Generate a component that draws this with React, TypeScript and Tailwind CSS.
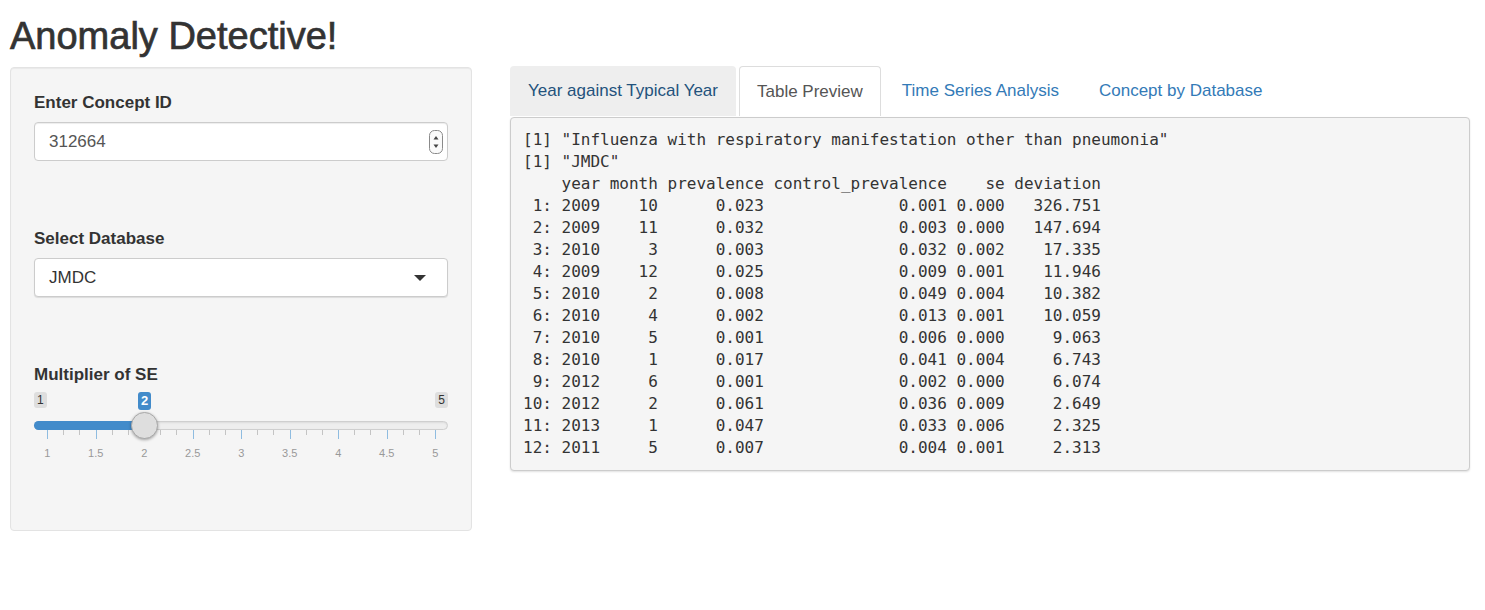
import React from "react";

const sans = { fontFamily: '"Liberation Sans", Arial, Helvetica, sans-serif' };

const preLines = [
  '[1] "Influenza with respiratory manifestation other than pneumonia"',
  '[1] "JMDC"',
  "    year month prevalence control_prevalence    se deviation",
  " 1: 2009    10      0.023              0.001 0.000   326.751",
  " 2: 2009    11      0.032              0.003 0.000   147.694",
  " 3: 2010     3      0.003              0.032 0.002    17.335",
  " 4: 2009    12      0.025              0.009 0.001    11.946",
  " 5: 2010     2      0.008              0.049 0.004    10.382",
  " 6: 2010     4      0.002              0.013 0.001    10.059",
  " 7: 2010     5      0.001              0.006 0.000     9.063",
  " 8: 2010     1      0.017              0.041 0.004     6.743",
  " 9: 2012     6      0.001              0.002 0.000     6.074",
  "10: 2012     2      0.061              0.036 0.009     2.649",
  "11: 2013     1      0.047              0.033 0.006     2.325",
  "12: 2011     5      0.007              0.004 0.001     2.313",
];

const tickLabels = ["1", "1.5", "2", "2.5", "3", "3.5", "4", "4.5", "5"];

// ion.rangeSlider look-alike: min/max/value badges, track, handle, grid
const Slider = () => (
  <div className="w-full pt-[2px]">
    <div className="relative flex h-[18px] items-start justify-between">
      <span className="h-[16px] rounded-[3px] bg-[#dedede] px-[3px] text-[12px] leading-[16px] text-[#333]">1</span>
      <span className="absolute left-[104px] top-0 h-[18px] rounded-[3px] bg-[#428bca] px-[3px] text-[13px] font-bold leading-[18px] text-white">2</span>
      <span className="h-[16px] rounded-[3px] bg-[#dedede] px-[3px] text-[12px] leading-[16px] text-[#333]">5</span>
    </div>
    <div className="relative mt-[11px] h-[9px] rounded-full border border-[#cfcfcf] bg-[#eeeeee] shadow-[inset_0_1px_2px_rgba(0,0,0,0.08)]">
      <div className="-ml-px -mt-px h-[9px] w-[112px] rounded-l-full bg-[#428bca]" />
      <div className="absolute left-[96px] top-[-10px] h-[27px] w-[27px] rounded-full border border-[#a9a9a9] bg-[#dedede] shadow-[0_1px_3px_rgba(0,0,0,0.35)]" />
    </div>
    <div className="flex h-[9px] items-start pl-[13px]">
      {tickLabels.slice(0, 8).map((t) => (
        <div key={t} className="flex w-[48.5px] shrink-0 items-start">
          <div className="h-[9px] w-px bg-[#8fbce0]" />
          <div className="ml-[15.2px] h-[5px] w-px bg-[#c4c4c4]" />
          <div className="ml-[15.2px] h-[5px] w-px bg-[#c4c4c4]" />
        </div>
      ))}
      <div className="h-[9px] w-px bg-[#8fbce0]" />
    </div>
    <div className="-ml-[11px] mt-[7px] flex">
      {tickLabels.map((t) => (
        <span key={t} className="w-[48.5px] shrink-0 text-center text-[11px] leading-[14px] text-[#999]">
          {t}
        </span>
      ))}
    </div>
  </div>
);

const App = () => {
  return (
    <div className="min-h-[610px] w-full bg-white px-[10px] text-[#333]" style={sans}>
      <h1 className="pt-[15px] text-[38px] font-normal leading-[42px] text-[#333] [-webkit-text-stroke:0.7px_#333]">Anomaly Detective!</h1>
      <div className="mt-[10px] flex items-start gap-[38px]">
        <div className="h-[464px] w-[462px] rounded-[4px] border border-[#e3e3e3] bg-[#f5f5f5] px-[23px] pt-[24px] shadow-[inset_0_1px_1px_rgba(0,0,0,0.05)]">
          <label className="block text-[17px] font-bold leading-[22px]">Enter Concept ID</label>
          <div className="mt-[8px] flex h-[39px] items-center justify-between rounded-[4px] border border-[#ccc] bg-white pl-[14px] pr-[4px] shadow-[inset_0_1px_1px_rgba(0,0,0,0.075)]">
            <span className="text-[17px] text-[#555]">312664</span>
            <svg width="14" height="24" viewBox="0 0 14 24">
              <rect x="0.5" y="0.5" width="13" height="23" rx="5" fill="#fafafa" stroke="#8a8a8a" />
              <path d="M4.5 9.5 L7 6 L9.5 9.5 Z" fill="#444" />
              <path d="M4.5 14.5 L7 18 L9.5 14.5 Z" fill="#444" />
            </svg>
          </div>

          <label className="mt-[67px] block text-[17px] font-bold leading-[22px]">Select Database</label>
          <div className="mt-[8px] flex h-[39px] items-center justify-between rounded-[4px] border border-[#ccc] bg-white pl-[14px] pr-[21px] shadow-[0_1px_1px_rgba(0,0,0,0.1)]">
            <span className="text-[17px] text-[#333]">JMDC</span>
            <svg width="12" height="6" viewBox="0 0 12 6">
              <path d="M0 0 L12 0 L6 6 Z" fill="#333" />
            </svg>
          </div>

          <label className="mt-[67px] block text-[17px] font-bold leading-[22px]">Multiplier of SE</label>
          <div className="mt-[4px]">
            <Slider />
          </div>
        </div>

        <div className="w-[960px]">
          <ul className="-mt-px flex h-[50px] items-stretch gap-[3px] text-[17px]">
            <li className="flex items-center rounded-t-[4px] bg-[#eeeeee] px-[18px] text-[#23527c]">Year against Typical Year</li>
            <li className="flex items-center rounded-t-[4px] border border-b-0 border-[#ddd] bg-white px-[17px] text-[#555]">Table Preview</li>
            <li className="flex items-center px-[18px] text-[#337ab7]">Time Series Analysis</li>
            <li className="flex items-center px-[19px] text-[#337ab7]">Concept by Database</li>
          </ul>
          <pre
            className="mt-px rounded-[4px] border border-[#ccc] bg-[#f5f5f5] pb-[11px] pl-[12px] pt-[11px] text-[16px] leading-[22px] text-[#333] shadow-[0_1px_2px_rgba(0,0,0,0.12)]"
            style={{ fontFamily: '"DejaVu Sans Mono", Menlo, monospace' }}
          >
            {preLines.join("\n")}
          </pre>
        </div>
      </div>
    </div>
  );
};

export default App;
